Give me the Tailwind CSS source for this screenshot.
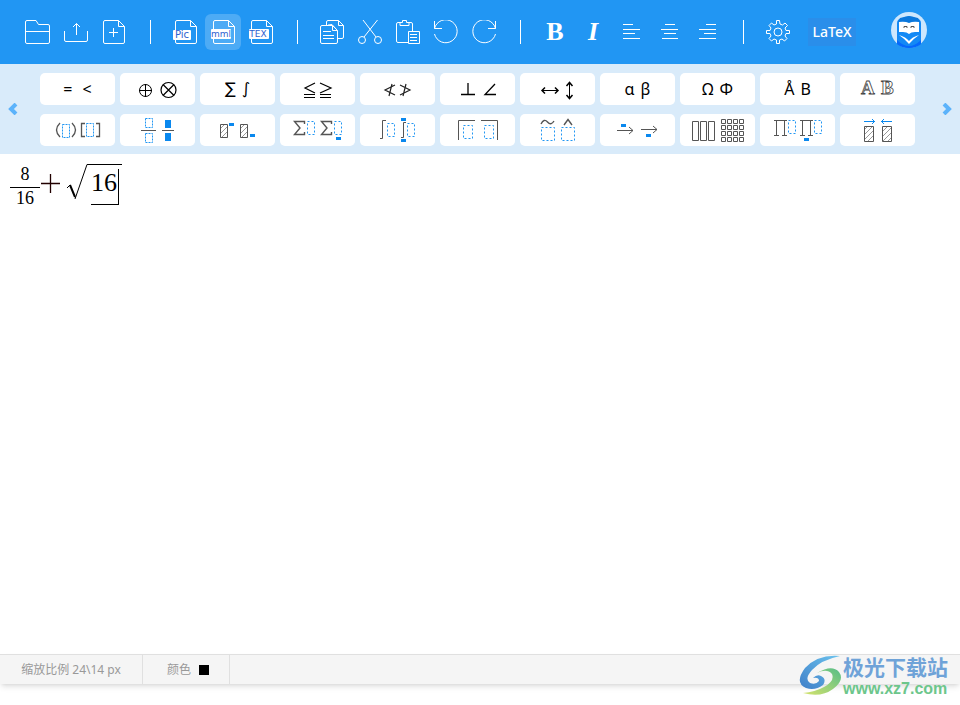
<!DOCTYPE html>
<html lang="zh-CN">
  <head>
    <meta charset="UTF-8" />
    <meta name="viewport" content="width=device-width, initial-scale=1" />
    <script src="https://cdn.jsdelivr.net/npm/@tailwindcss/browser@4"></script>
    <title>LaTeX</title>
  </head>
  <body class="relative min-h-screen flex flex-col bg-white font-['Noto_Sans','Noto_Sans_CJK_SC',sans-serif]">
    <!-- shared hatch fill for the palette -->
    <svg class="absolute w-0 h-0" aria-hidden="true">
      <defs>
        <pattern id="hatch" width="5" height="5" patternUnits="userSpaceOnUse">
          <path d="M-1 6L6 -1M-1 1L1 -1M4 6L6 4" stroke="#999" stroke-width="1" />
        </pattern>
      </defs>
    </svg>

    <header class="h-16 flex items-center pl-5 pr-[33px] bg-[#2196f3] text-white">
      <div class="flex gap-0.5">
        <button class="size-9 grid place-items-center" aria-label="Open">
          <svg class="size-6 overflow-visible" viewBox="0 0 24 24" fill="none" stroke="currentColor"><path d="M-.5 22V2Q-.5 .5 1 .5H10L12.500 4.500H22Q23.500 4.500 23.500 6V22Q23.500 23.500 22 23.500H1Q-.5 23.500 -.5 22ZM-.5 11.500H23.500" /></svg>
        </button>
        <button class="size-9 grid place-items-center" aria-label="Export">
          <svg class="size-6" viewBox="0 0 24 24" fill="none" stroke="currentColor"><path d="M.5 11V20Q.5 21.500 2 21.500H22Q23.500 21.500 23.500 20V11M12.500 15V3.500M9 7L12.500 3.500L16 7" /></svg>
        </button>
        <button class="size-9 grid place-items-center" aria-label="New">
          <svg class="size-6" viewBox="0 0 24 24" fill="none" stroke="currentColor"><path d="M3 .5H16.500L22.500 6.500V22Q22.500 23.500 21 23.500H3Q1.500 23.500 1.500 22V2Q1.500 .5 3 .5ZM16.500 .5V6.500H22.500M11.500 8V17M7 12.500H16" /></svg>
        </button>
      </div>
      <div class="w-px h-6 ml-[18px] mr-4 bg-white"></div>
      <div class="flex gap-0.5">
        <button class="size-9 grid place-items-center" aria-label="Pic">
          <svg class="size-6 overflow-visible" viewBox="0 0 24 24" fill="none" stroke="currentColor"><path d="M4 .5H17.500L23.500 6.500V22Q23.500 23.500 22 23.500H4Q2.500 23.500 2.500 22V2Q2.500 .5 4 .5ZM17.500 .5V6.500H23.500" /><rect y="10" width="18" height="10" rx="1" fill="#fff" stroke="none" /><text x="9" y="18" text-anchor="middle" font-family="DejaVu Sans" font-size="10" fill="#2f62d0" stroke="none">Pic</text></svg>
        </button>
        <button class="size-9 grid place-items-center rounded-md bg-white/20" aria-label="mml">
          <svg class="size-6 overflow-visible" viewBox="0 0 24 24" fill="none" stroke="currentColor"><path d="M4 .5H17.500L23.500 6.500V22Q23.500 23.500 22 23.500H4Q2.500 23.500 2.500 22V2Q2.500 .5 4 .5ZM17.500 .5V6.500H23.500" /><rect y="9" width="20" height="10" rx="1" fill="#fff" stroke="none" /><text x="10" y="17" text-anchor="middle" font-family="DejaVu Sans" font-size="9" fill="#2f62d0" stroke="none">mml</text></svg>
        </button>
        <button class="size-9 grid place-items-center" aria-label="TEX">
          <svg class="size-6 overflow-visible" viewBox="0 0 24 24" fill="none" stroke="currentColor"><path d="M4 .5H17.500L23.500 6.500V22Q23.500 23.500 22 23.500H4Q2.500 23.500 2.500 22V2Q2.500 .5 4 .5ZM17.500 .5V6.500H23.500" /><rect y="9" width="20" height="10" rx="1" fill="#fff" stroke="none" /><text x="9" y="17" text-anchor="middle" font-family="DejaVu Sans" font-size="9" fill="#2f62d0" stroke="none">TEX</text></svg>
        </button>
      </div>
      <div class="w-px h-6 ml-[18px] mr-4 bg-white"></div>
      <div class="flex gap-0.5">
        <button class="size-9 grid place-items-center" aria-label="Copy">
          <svg class="size-6" viewBox="0 0 24 24" fill="none" stroke="currentColor"><path d="M2 5.500H12.500L17.500 10.500V22Q17.500 23.500 16 23.500H2Q.5 23.500 .5 22V7Q.5 5.500 2 5.500ZM12.500 5.500V10.500H17.500M3 11.500H11M3 15.500H14M3 18.500H14M6.500 5V2Q6.500 .5 8 .5H18.500L23.500 5.500V17Q23.500 18.500 22 18.500H18M18.500 .5V5.500H23.500M8 5L12 4.500L17 10" /></svg>
        </button>
        <button class="size-9 grid place-items-center" aria-label="Cut">
          <svg class="size-6" viewBox="0 0 24 24" fill="none" stroke="currentColor"><circle cx="4" cy="20" r="3.500" /><circle cx="20" cy="20" r="3.500" /><path d="M5 0L18 17M19.500 0L6 17" /></svg>
        </button>
        <button class="size-9 grid place-items-center" aria-label="Paste">
          <svg class="size-6" viewBox="0 0 24 24" fill="none" stroke="currentColor"><path d="M12 22.500H2Q.5 22.500 .5 21V4Q.5 2.500 2 2.500H4M13 2.500H15Q16.500 2.500 16.500 4V11M4 5.500V2.500H6.500V.5H10.500V2.500H13V5.500ZM12.500 11.500H23.500V23.500H12.500ZM14 14.500H21M14 17.500H21M14 20.500H21" /></svg>
        </button>
        <button class="size-9 grid place-items-center" aria-label="Undo">
          <svg class="size-6" viewBox="0 0 24 24" fill="none" stroke="currentColor"><path d="M.5 1V8.500H8M.5 8.500A11.500 11.500 0 1 1 .5 14" /></svg>
        </button>
        <button class="size-9 grid place-items-center" aria-label="Redo">
          <svg class="size-6" viewBox="0 0 24 24" fill="none" stroke="currentColor"><path d="M23.500 1V8.500H16M23.500 8.500A11.500 11.500 0 1 0 23.500 14" /></svg>
        </button>
      </div>
      <div class="w-px h-6 ml-[18px] mr-4 bg-white"></div>
      <div class="flex gap-0.5">
        <button class="size-9 font-['Liberation_Serif',serif] text-[26px] leading-9 font-bold">B</button>
        <button class="size-9 font-['Liberation_Serif',serif] text-[26px] leading-9 font-bold italic">I</button>
        <button class="size-9 grid place-items-center" aria-label="Align left">
          <svg class="size-6" viewBox="0 0 24 24" stroke="currentColor"><path d="M4 4.500H14M4 9.500H21M4 13.500H16M4 18.500H21" /></svg>
        </button>
        <button class="size-9 grid place-items-center" aria-label="Align center">
          <svg class="size-6" viewBox="0 0 24 24" stroke="currentColor"><path d="M8 4.500H18M4 9.500H21M7 13.500H19M5 18.500H21" /></svg>
        </button>
        <button class="size-9 grid place-items-center" aria-label="Align right">
          <svg class="size-6" viewBox="0 0 24 24" stroke="currentColor"><path d="M11 4.500H21M4 9.500H21M9 13.500H21M4 18.500H21" /></svg>
        </button>
      </div>
      <div class="w-px h-6 ml-[18px] mr-4 bg-white"></div>
      <button class="size-9 grid place-items-center" aria-label="Settings">
        <svg class="size-6" viewBox="0 0 24 24" fill="none" stroke="currentColor"><circle cx="12" cy="12" r="4" /><path d="M10.500 .5H13.500L14 4L16.500 5L19 3L21.500 5.500L19 8L20 10.500H23.500V13.500H20L19 16L21 18.500L18.500 21L16 19L13.500 20V23.500H10.500V20L8 19L5.500 21L3 18.500L5 16L4 13.500H.5V10.500H4L5 8L3 5.500L5.500 3L8 5L10.500 4Z" /></svg>
      </button>
      <button class="w-12 h-7 ml-3 bg-[#2a8eea] text-sm font-medium">LaTeX</button>
      <button class="size-9 ml-auto mb-1" aria-label="Account">
        <svg class="size-9" viewBox="0 0 36 36">
          <circle cx="18" cy="18" r="18" fill="#cde7fd" />
          <path d="M6 32V11Q6 7 11 6L15 5L18 4L21 5L25 6Q30 7 30 11V32Q25 36 18 36T6 32Z" fill="#1389f5" />
          <path d="M9 6Q16 4 18 4T27 6L29 10Q24 9 18 11Q12 9 7 10Z" fill="#0b78dc" />
          <path d="M8 10Q14 9 18 11Q22 9 28 10V20H24Q20 20 18 22Q16 20 12 20H8Z" fill="#fff" />
          <path d="M13 16V14.500H16V16M20 16V14.500H23V16" fill="none" stroke="#555" />
          <path d="M8 23Q15 25 18 29Q21 25 28 23Q22 27 18 32Q14 27 8 23Z" fill="#fff" />
          <path d="M6 28Q12 34 18 34T30 28V32Q25 36 18 36T6 32Z" fill="#0668fb" />
        </svg>
      </button>
    </header>

    <nav class="flex items-center bg-[#d9ebfa]">
      <button class="w-10 pl-2" aria-label="Previous">
        <svg class="w-[10px] h-3" viewBox="0 0 10 12" fill="none" stroke="#5cb3fb" stroke-width="4"><path d="M8 1L3 6L8 11" /></svg>
      </button>
      <div class="flex-1 grid grid-cols-11 gap-x-[5px] gap-y-[9px] pt-[9px] pb-2 text-base text-black">
        <button class="h-8 rounded-[5px] bg-white flex items-center justify-center gap-2.5"><span>=</span><span>&lt;</span></button>
        <button class="h-8 rounded-[5px] bg-white" aria-label="Operators">
          <svg class="w-full h-8" viewBox="0 0 75 32" fill="none" stroke="#000"><circle cx="25.500" cy="17.500" r="6" /><path d="M19 17.500H32M25.500 11V24" /><circle cx="48.500" cy="17" r="7.500" stroke-width="1.200" /><path d="M43 11.500L54 22.500M54 11.500L43 22.500" stroke-width="1.200" /></svg>
        </button>
        <button class="h-8 rounded-[5px] bg-white flex items-center justify-center gap-1.5 font-['DejaVu_Sans',sans-serif]"><span>∑</span><span>∫</span></button>
        <button class="h-8 rounded-[5px] bg-white" aria-label="Inequalities">
          <svg class="w-full h-8" viewBox="0 0 75 32" fill="none" stroke="#000"><path d="M35 10L25 15L35 20M40 10L51 15L40 20" stroke-width="1.200" /><path d="M24 21.500H35M24 24.500H35M40 21.500H51M40 24.500H51" /></svg>
        </button>
        <button class="h-8 rounded-[5px] bg-white" aria-label="Negated relations">
          <svg class="w-full h-8" viewBox="0 0 75 32" fill="none" stroke="#222"><path d="M35 12L25 17L35 22M32 11L29 23M40 12L50 17L40 22M46 11L43 23" stroke-width="1.200" /></svg>
        </button>
        <button class="h-8 rounded-[5px] bg-white" aria-label="Geometry">
          <svg class="w-full h-8" viewBox="0 0 75 32" fill="none" stroke="#000"><path d="M21 21.500H35M28 10V22M55 11L45 21.500H56" stroke-width="1.300" /></svg>
        </button>
        <button class="h-8 rounded-[5px] bg-white" aria-label="Arrows">
          <svg class="w-full h-8" viewBox="0 0 75 32" fill="none" stroke="#000"><path d="M22 17.500H38M49.500 10V25" /><path d="M25 14.500L22 17.500L25 20.500M35 14.500L38 17.500L35 20.500M46.500 13L49.500 9.500L52.500 13M46.500 22L49.500 25.500L52.500 22" stroke-width="1.500" /></svg>
        </button>
        <button class="h-8 rounded-[5px] bg-white flex items-center justify-center gap-1.5"><span>α</span><span>β</span></button>
        <button class="h-8 rounded-[5px] bg-white flex items-center justify-center gap-1.5"><span>Ω</span><span>Φ</span></button>
        <button class="h-8 rounded-[5px] bg-white flex items-center justify-center gap-1.5"><span>Å</span><span>B</span></button>
        <button class="h-8 rounded-[5px] bg-white" aria-label="Double-struck letters">
          <svg class="w-full h-8" viewBox="0 0 75 32" font-family="Liberation Serif" font-size="19" font-weight="bold" fill="#fff" stroke="#444" stroke-width="0.800"><text x="21" y="21">A</text><text x="41" y="21">B</text></svg>
        </button>

        <button class="h-8 rounded-[5px] bg-white" aria-label="Brackets">
          <svg class="w-full h-8" viewBox="0 0 75 32" fill="none" stroke="#555"><path d="M20 9Q13 16 20 23M32 9Q39 16 32 23M45 9.500H41.500V22.500H45M56 9.500H59.500V22.500H56" stroke-width="1.300" /><path d="M22.500 10.500H29.500V23.500H22.500ZM46.500 9.500H53.500V22.500H46.500Z" stroke="#2196f3" stroke-dasharray="2 1" /></svg>
        </button>
        <button class="h-8 rounded-[5px] bg-white" aria-label="Fractions">
          <svg class="w-full h-8" viewBox="0 0 75 32" fill="none" stroke="#555"><path d="M21 16.500H36M42 16.500H54" /><path d="M25.500 4.500H32.500V13.500H25.500ZM25.500 19.500H32.500V28.500H25.500Z" stroke="#2196f3" stroke-dasharray="2 1" /><path d="M45 6H51V14H45ZM45 19H51V27H45Z" fill="#0a88ee" stroke="none" /></svg>
        </button>
        <button class="h-8 rounded-[5px] bg-white" aria-label="Scripts">
          <svg class="w-full h-8" viewBox="0 0 75 32" stroke="#555"><path d="M20.500 10.500H27.500V23.500H20.500ZM40.500 10.500H47.500V23.500H40.500Z" fill="url(#hatch)" /><path d="M29 9H34V12H29ZM50 20H55V23H50Z" fill="#0a88ee" stroke="none" /></svg>
        </button>
        <button class="h-8 rounded-[5px] bg-white" aria-label="Sums">
          <svg class="w-full h-8" viewBox="0 0 75 32" fill="none" stroke="#555"><path d="M24.500 10V7.500H14.500L20 14L14.500 20.500H24.500V18M51.500 10V7.500H41.500L47 14L41.500 20.500H51.500V18" stroke-width="1.400" /><path d="M27.500 7.500H34.500V20.500H27.500ZM54.500 7.500H61.500V20.500H54.500Z" stroke="#2196f3" stroke-dasharray="2 2" /><path d="M56 23H61V26H56Z" fill="#0a88ee" stroke="none" /></svg>
        </button>
        <button class="h-8 rounded-[5px] bg-white" aria-label="Integrals">
          <svg class="w-full h-8" viewBox="0 0 75 32" fill="none" stroke="#555"><path d="M26 6.500H22.500V24.500H20M46 8.500H43.500V23.500H41" /><path d="M27.500 9.500H34.500V22.500H27.500ZM47.500 9.500H54.500V22.500H47.500Z" stroke="#2196f3" stroke-dasharray="2 2" /><path d="M41 4H46V7H41ZM41 25H46V28H41Z" fill="#0a88ee" stroke="none" /></svg>
        </button>
        <button class="h-8 rounded-[5px] bg-white" aria-label="Corners">
          <svg class="w-full h-8" viewBox="0 0 75 32" fill="none" stroke="#555"><path d="M18.500 26V6.500H35M41 6.500H57.500V26" /><path d="M23.500 11.500H32.500V24.500H23.500ZM44.500 11.500H53.500V24.500H44.500Z" stroke="#2196f3" stroke-dasharray="2 2" /></svg>
        </button>
        <button class="h-8 rounded-[5px] bg-white" aria-label="Accents">
          <svg class="w-full h-8" viewBox="0 0 75 32" fill="none" stroke="#555"><path d="M21 10Q24 4 27.500 8T34 7M44 11L48 5.500L52 11" stroke-width="1.400" /><path d="M21.500 13.500H34.500V26.500H21.500ZM41.500 13.500H54.500V26.500H41.500Z" stroke="#2196f3" stroke-dasharray="2 2" /></svg>
        </button>
        <button class="h-8 rounded-[5px] bg-white" aria-label="Labelled arrows">
          <svg class="w-full h-8" viewBox="0 0 75 32" fill="none" stroke="#555"><path d="M17 16.500H33M29 13L33 16.500L29 20M41 15.500H57M53 12L57 15.500L53 19" /><path d="M21 10H26V13H21ZM46 20H51V23H46Z" fill="#0a88ee" stroke="none" /></svg>
        </button>
        <button class="h-8 rounded-[5px] bg-white" aria-label="Matrices">
          <svg class="w-full h-8" viewBox="0 0 75 32" fill="none" stroke="#555"><path d="M12.500 7.500H18.500V26.500H12.500ZM20.500 7.500H26.500V26.500H20.500ZM28.500 7.500H34.500V26.500H28.500Z" /><path d="M41.500 5.500h4v4h-4zm6 0h4v4h-4zm6 0h4v4h-4zm6 0h4v4h-4zM41.500 11.500h4v4h-4zm6 0h4v4h-4zm6 0h4v4h-4zm6 0h4v4h-4zM41.500 17.500h4v4h-4zm6 0h4v4h-4zm6 0h4v4h-4zm6 0h4v4h-4zM41.500 23.500h4v4h-4zm6 0h4v4h-4zm6 0h4v4h-4zm6 0h4v4h-4z" /></svg>
        </button>
        <button class="h-8 rounded-[5px] bg-white" aria-label="Products">
          <svg class="w-full h-8" viewBox="0 0 75 32" fill="none" stroke="#555"><path d="M14 6.500H27M16.500 6V21M24.500 6V21M14 21.500H19M22 21.500H27M40 6.500H53M42.500 6V21M50.500 6V21M40 21.500H45M48 21.500H53" /><path d="M28.500 6.500H35.500V19.500H28.500ZM54.500 6.500H61.500V19.500H54.500Z" stroke="#2196f3" stroke-dasharray="2 2" /><path d="M44 24H49V27H44Z" fill="#0a88ee" stroke="none" /></svg>
        </button>
        <button class="h-8 rounded-[5px] bg-white" aria-label="Vectors">
          <svg class="w-full h-8" viewBox="0 0 75 32" fill="none" stroke="#555"><path d="M24.500 12.500H33.500V27.500H24.500ZM42.500 12.500H51.500V27.500H42.500Z" fill="url(#hatch)" /><path d="M24 7.500H35M32 5L34.500 7.500L32 10M41 7.500H52M44 5L41.500 7.500L44 10" stroke="#0a88ee" /></svg>
        </button>
      </div>
      <button class="w-[45px] pr-2 flex justify-end" aria-label="Next">
        <svg class="w-[10px] h-3" viewBox="0 0 10 12" fill="none" stroke="#5cb3fb" stroke-width="4"><path d="M2 1L7 6L2 11" /></svg>
      </button>
    </nav>

    <!-- formula being edited -->
    <main class="flex-1 flex items-start px-[10px] pt-[10px] font-['Liberation_Serif',serif] text-black">
      <div class="w-[30px] text-center text-lg leading-5">
        <div class="h-6 border-b border-black">8</div>
        <div class="h-5">16</div>
      </div>
      <svg class="w-[21px] h-10" viewBox="0 0 21 40" stroke="#200" role="img" aria-label="+"><path d="M1 19.500H20M10.500 10V29" stroke-width="1.300" /></svg>
      <svg class="w-[30px] h-10 pl-[5px]" viewBox="0 0 25 40" fill="none" stroke="#000"><path d="M1 24L4 21" /><path d="M4 21L9 33" stroke-width="2" /><path d="M9 35L21 .5H25" /></svg>
      <div class="w-[31px] border-t border-black">
        <div class="w-7 h-10 pt-1">
          <div class="h-9 border-r border-b border-black text-[26px] leading-7">16</div>
        </div>
      </div>
    </main>

    <footer class="h-[30px] mb-[21px] flex border-t border-[#e0e0e0] bg-[#f5f5f5] text-xs text-[#999] shadow-md">
      <div class="w-[143px] flex items-center justify-center border-r border-[#e0e0e0]">缩放比例 24\14 px</div>
      <button class="w-[87px] pl-1 flex items-center justify-center gap-2 border-r border-[#e0e0e0]">颜色 <span class="size-[10px] bg-black"></span></button>
    </footer>

    <!-- site badge -->
    <a href="#" class="absolute right-3 bottom-2 flex items-center">
      <svg class="w-11 h-[42px]" viewBox="0 0 44 42">
        <defs>
          <linearGradient id="blue" x1="0" y1="1" x2="1" y2="0"><stop stop-color="#3f7fc8" /><stop offset="1" stop-color="#6cc3ee" /></linearGradient>
          <linearGradient id="green" x1="0" y1="1" x2="1" y2="0"><stop stop-color="#d6e36c" /><stop offset="1" stop-color="#55bd88" /></linearGradient>
        </defs>
        <path d="M41 2Q19 0 6 14Q-5 29 7 34Q16 37 24 31Q28 25 22 22Q18 20 14 24Q20 23 20 27Q17 31 11 29Q5 25 13 16Q22 6 41 2Z" fill="url(#blue)" />
        <path d="M18 19Q28 14 33 20Q36 27 25 33Q16 38 4 39Q22 44 34 35Q46 26 40 18Q33 10 18 19Z" fill="url(#green)" />
      </svg>
      <span class="font-bold">
        <span class="block h-7 text-[21px] leading-7 text-[#6fa3d8]">极光下载站</span>
        <span class="block font-['Liberation_Sans',sans-serif] text-base leading-4 text-[#6cc68b]">www.xz7.com</span>
      </span>
    </a>
  </body>
</html>
